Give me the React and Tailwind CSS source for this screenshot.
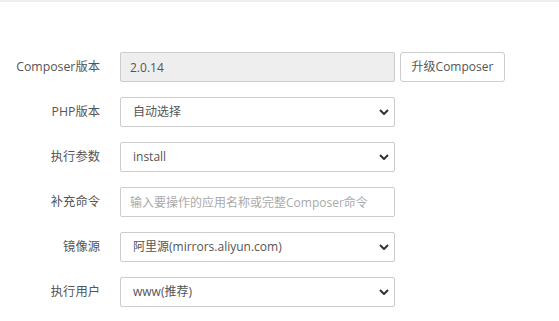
import React from "react";

const ChevronDown = () => (
  <svg
    viewBox="0 0 10 6"
    className="pointer-events-none absolute right-[6px] top-1/2 -translate-y-1/2 w-[10px] h-[6px]"
  >
    <path d="M1 1l4 4 4-4" fill="none" stroke="#333" strokeWidth="2" />
  </svg>
);

const Row = ({ label, children }) => (
  <div className="flex items-center h-[30px]">
    <label className="w-[100px] text-right text-[12.3px] text-[#555] shrink-0">
      {label}
    </label>
    <div className="ml-[20px] flex items-center gap-[5px]">{children}</div>
  </div>
);

const Select = ({ value }) => (
  <div className="relative w-[275px] h-[30px]">
    <select
      defaultValue={value}
      className="appearance-none w-full h-full border border-[#ccc] rounded-[2px] bg-white pl-[12px] text-[12px] text-[#555] outline-none"
    >
      <option>{value}</option>
    </select>
    <ChevronDown />
  </div>
);

export default function App() {
  return (
    <div
      className="w-[559px] h-[321px] bg-white border-t-2 border-[#eee]"
      style={{ fontFamily: '"Open Sans", "Noto Sans CJK SC", sans-serif' }}
    >
      <div className="pt-[50px] flex flex-col gap-[15px]">
        <Row label="Composer版本">
          <input
            readOnly
            value="2.0.14"
            className="w-[275px] h-[30px] border border-[#ccc] rounded-[2px] bg-[#eee] px-[9px] text-[12px] text-[#555] outline-none"
          />
          <button className="h-[30px] w-[105px] border border-[#ccc] rounded-[3px] bg-white text-[12px] text-[#555]">
            升级Composer
          </button>
        </Row>
        <Row label="PHP版本">
          <Select value="自动选择" />
        </Row>
        <Row label="执行参数">
          <Select value="install" />
        </Row>
        <Row label="补充命令">
          <input
            placeholder="输入要操作的应用名称或完整Composer命令"
            className="w-[275px] h-[30px] border border-[#ccc] rounded-[2px] bg-white px-[9px] text-[12px] text-[#555] placeholder:text-[#aaa] outline-none"
          />
        </Row>
        <Row label="镜像源">
          <Select value="阿里源(mirrors.aliyun.com)" />
        </Row>
        <Row label="执行用户">
          <Select value="www(推荐)" />
        </Row>
      </div>
    </div>
  );
}
